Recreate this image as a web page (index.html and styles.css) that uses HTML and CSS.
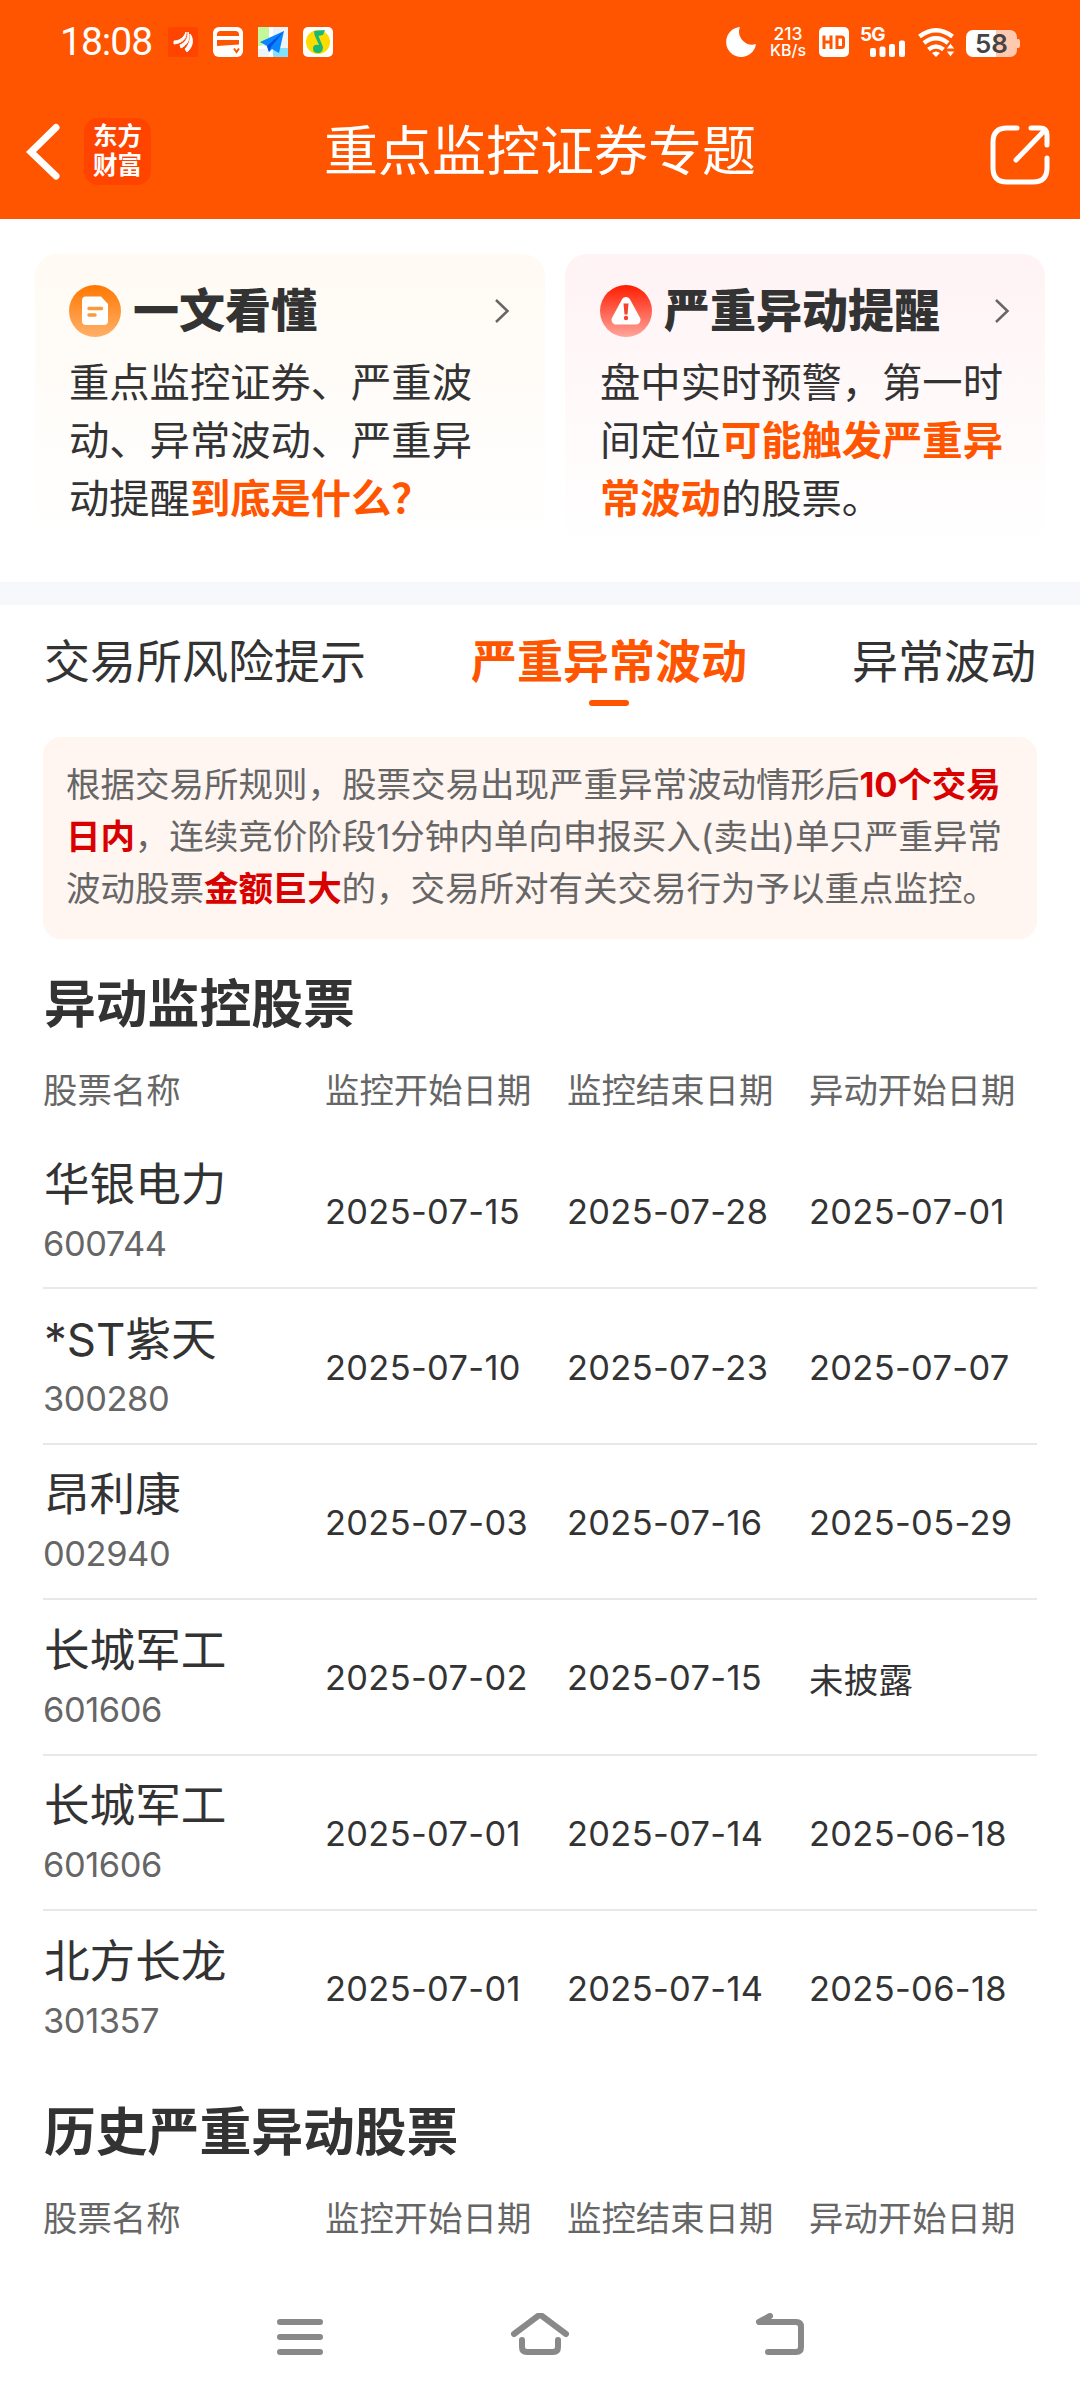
FILE: index.html
```html
<!DOCTYPE html>
<html lang="zh-CN">
<head>
    <meta charset="UTF-8">
    <meta name="viewport" content="width=device-width, initial-scale=1.0">
    <meta name="format-detection" content="telephone=no">
    <title>重点监控证券专题</title>
    <link rel="stylesheet" href="styles.css">
</head>
<body>

<!--顶部-->
<header class="top">
    <div class="status">
        <span class="time">18:08</span>
        <div class="status-apps">
            <svg width="30" height="30" viewBox="0 0 30 30"><rect width="30" height="30" rx="2" fill="#ff4400"/><path d="M6 14C11 14 16 11 18 5C19 12 14 16 6 17zM12 18C17 16 20 12 20 5C23 12 19 18 13 21zM17 22C21 18 23 12 22 7C26 12 25 20 19 25z" fill="#fff" stroke="#fff"/></svg>
            <svg width="30" height="30" viewBox="0 0 30 30"><rect width="30" height="30" rx="6" fill="#fff"/><path d="M4 9V7.500Q4 4 7.500 4H22.500Q26 4 26 7.500V9zM4 13H26V17.500L4 19z" fill="#f50"/><path d="M21 21.500L23.500 25L26 21.500" fill="none" stroke="#f50" stroke-width="2"/></svg>
            <svg width="30" height="30" viewBox="0 0 30 30"><rect width="30" height="30" fill="#eef3f6"/><path d="M0 0H11V14L0 20z" fill="#c3f79c"/><path d="M15 21H30V30H15z" fill="#84e0ff"/><path d="M11 0H15V10H11zM0 19H15V30H11V22H0z" fill="#fff"/><path d="M26 4L2 15L9 19L11 25L14 22L21 26z" fill="#0a84ff"/><path d="M26 4L9 19L11 25L13 20z" fill="#0050e0"/></svg>
            <svg width="30" height="30" viewBox="0 0 30 30"><rect width="30" height="30" rx="5" fill="#fff"/><circle cx="15" cy="15" r="12" fill="#ffdc00"/><path d="M11 4L22 3L20 8L15.500 9L20 20Q20 26 15 26Q10 26 10 21.500Q10 17 16 18L11.500 8z" fill="#17b978"/></svg>
        </div>
        <div class="status-sys">
            <svg class="moon" width="30" height="30" viewBox="0 0 30 30"><path d="M14 0A15 15 0 1 0 30 17A13 13 0 0 1 14 0z" fill="#fff"/></svg>
            <div class="speed"><span>213</span><span>KB/s</span></div>
            <svg class="hd" width="30" height="30" viewBox="0 0 30 30"><rect width="30" height="30" rx="5" fill="#fff"/><path d="M5 8.500V22M12 8.500V22M5 15H12M18 10V20.500H22.500Q24.500 20.500 24.500 18.500V12Q24.500 10 22.500 10z" fill="none" stroke="#f50" stroke-width="3"/></svg>
            <div class="signal">
                <span class="net">5G</span>
                <svg width="36" height="17" viewBox="0 0 36 17"><rect y="8" width="6" height="9" rx="2"/><rect x="9.500" y="6.500" width="6" height="10.500" rx="2"/><rect x="19" y="4" width="6" height="13" rx="2"/><rect x="29" y="0.500" width="6" height="16.500" rx="2"/></svg>
            </div>
            <svg class="wifi" width="37" height="30" viewBox="0 0 37 30"><g fill="none" stroke="#fff" stroke-width="4.500"><path d="M1.500 9.500Q18 -3 34.500 9.500"/><path d="M6 16Q18 6.500 30 16"/><path d="M10.500 22.500Q18 16.500 25.500 22.500"/></g><path d="M14 26Q18 23 22 26L18 30z" fill="#fff"/><path d="M28 22L32.500 16L37 22zM28 24L32.500 30L37 24z" fill="#fff" stroke="#f50"/></svg>
            <div class="battery"><span>58</span></div>
        </div>
    </div>
    <div class="nav">
        <svg class="back" width="36" height="60" viewBox="0 0 36 60"><path d="M31 5.500L6 30L31 54" fill="none" stroke="#fff" stroke-width="7" stroke-linecap="round"/></svg>
        <div class="logo">东方<br>财富</div>
        <h1 class="title">重点监控证券专题</h1>
        <svg class="share" width="60" height="60" viewBox="0 0 60 60"><path d="M27 3H17Q3 3 3 17V43Q3 57 17 57H43Q57 57 57 43V33M41 3H50Q57 3 57 10V20M55 5L26 35" fill="none" stroke="#fff" stroke-width="5" stroke-linecap="round"/></svg>
    </div>
</header>

<!--说明卡片-->
<section class="cards">
    <div class="card card-yellow">
        <div class="card-hd">
            <svg width="52" height="52" viewBox="0 0 52 52"><defs><linearGradient id="g1" x1="0" y1="0" x2="0" y2="1"><stop offset="0" stop-color="#ff7800"/><stop offset="1" stop-color="#ffb06a"/></linearGradient></defs><circle cx="26" cy="26" r="26" fill="url(#g1)"/><path d="M17 11.500H32L39 19V36Q39 40 35 40H17Q13 40 13 36V15.500Q13 11.500 17 11.500z" fill="#fff"/><path d="M20 23.500H32.500M20 30H26" stroke="#f99a3c" stroke-width="3.500" stroke-linecap="round"/></svg>
            <h2>一文看懂</h2>
            <svg class="arrow" width="16" height="24" viewBox="0 0 16 24"><path d="M2 1L13.500 12L2 23" fill="none" stroke="#666" stroke-width="2.500"/></svg>
        </div>
        <p>重点监控证券、严重波动、异常波动、严重异动提醒<b>到底是什么？</b></p>
    </div>
    <div class="card card-red">
        <div class="card-hd">
            <svg width="52" height="52" viewBox="0 0 52 52"><defs><linearGradient id="g2" x1="0" y1="0" x2="0" y2="1"><stop offset="0" stop-color="#ff1c00"/><stop offset="1" stop-color="#ffa59c"/></linearGradient></defs><circle cx="26" cy="26" r="26" fill="url(#g2)"/><path d="M26 16.500L16 35H36z" fill="#fff" stroke="#fff" stroke-width="9" stroke-linejoin="round"/><path d="M23.500 18.500H28.500L27.500 29.500H24.500z" fill="#f5432f"/><circle cx="26" cy="33" r="2.200" fill="#f5432f"/></svg>
            <h2>严重异动提醒</h2>
            <svg class="arrow" width="16" height="24" viewBox="0 0 16 24"><path d="M2 1L13.500 12L2 23" fill="none" stroke="#666" stroke-width="2.500"/></svg>
        </div>
        <p>盘中实时预警，第一时间定位<b>可能触发严重异常波动</b>的股票。</p>
    </div>
</section>

<!--tab-->
<nav class="tabs">
    <a class="tab">交易所风险提示</a>
    <a class="tab on">严重异常波动</a>
    <a class="tab">异常波动</a>
</nav>

<main class="main">
    <p class="notice">根据交易所规则，股票交易出现严重异常波动情形后<b>10个交易日内</b>，连续竞价阶段1分钟内单向申报买入(卖出)单只严重异常波动股票<b>金额巨大</b>的，交易所对有关交易行为予以重点监控。</p>

    <h3 class="sec-title">异动监控股票</h3>
    <div class="row row-hd">
        <span>股票名称</span><span>监控开始日期</span><span>监控结束日期</span><span>异动开始日期</span>
    </div>
    <ul class="list">
        <li class="row">
            <div class="stock"><p class="name">华银电力</p><p class="code">600744</p></div>
            <span>2025-07-15</span><span>2025-07-28</span><span>2025-07-01</span>
        </li>
        <li class="row">
            <div class="stock"><p class="name">*ST紫天</p><p class="code">300280</p></div>
            <span>2025-07-10</span><span>2025-07-23</span><span>2025-07-07</span>
        </li>
        <li class="row">
            <div class="stock"><p class="name">昂利康</p><p class="code">002940</p></div>
            <span>2025-07-03</span><span>2025-07-16</span><span>2025-05-29</span>
        </li>
        <li class="row">
            <div class="stock"><p class="name">长城军工</p><p class="code">601606</p></div>
            <span>2025-07-02</span><span>2025-07-15</span><span>未披露</span>
        </li>
        <li class="row">
            <div class="stock"><p class="name">长城军工</p><p class="code">601606</p></div>
            <span>2025-07-01</span><span>2025-07-14</span><span>2025-06-18</span>
        </li>
        <li class="row">
            <div class="stock"><p class="name">北方长龙</p><p class="code">301357</p></div>
            <span>2025-07-01</span><span>2025-07-14</span><span>2025-06-18</span>
        </li>
    </ul>

    <h3 class="sec-title">历史严重异动股票</h3>
    <div class="row row-hd">
        <span>股票名称</span><span>监控开始日期</span><span>监控结束日期</span><span>异动开始日期</span>
    </div>
</main>

<!--系统导航-->
<footer class="sysbar">
    <svg width="60" height="48" viewBox="0 0 60 48"><path d="M10 9H50M10 24H50M10 39H50"/></svg>
    <svg width="60" height="48" viewBox="0 0 60 48"><path d="M4 21L28 3Q30 1.500 32 3L56 21M12 27V34Q12 39 17 39H43Q48 39 48 34V27"/></svg>
    <svg width="60" height="48" viewBox="0 0 60 48"><path d="M20 3L9 9H46Q51 9 51 14V34Q51 39 46 39H18"/></svg>
</footer>

</body>
</html>
```
FILE: styles.css
```css
*{ box-sizing: border-box; margin: 0; padding: 0;}
body{ width: 1080px; height: 2400px; overflow: hidden; display: flex; flex-direction: column; background: #fff; color: #333; font-family: Inter, "Noto Sans CJK SC", sans-serif;}
ul,li{ list-style: none;}
svg{ display: block; flex: none;}

/* 顶部 */
.top{ height: 219px; background: #ff5500; color: #fff;}
.status{ display: flex; align-items: center; height: 84px; padding: 0 60px;}
.time{ width: 108px; font-family: Roboto, sans-serif; font-size: 39px; line-height: 40px; letter-spacing: -1px;}
.status-apps{ display: flex; gap: 15px;}
.status-sys{ display: flex; align-items: center; margin-left: auto;}
.speed{ display: flex; flex-direction: column; align-items: center; width: 36px; margin: 0 13px 0 14px; font-size: 17.500px; line-height: 16px; font-weight: 500; white-space: nowrap;}
.speed span:last-child{ font-size: 16px;}
.signal{ width: 46px; height: 30px; margin: 0 12px 0 11px;}
.net{ display: block; height: 13px; font-size: 19px; line-height: 15px; font-weight: 700; letter-spacing: -1px;}
.signal svg{ margin-left: 10px; fill: #fff;}
.battery{ display: flex; align-items: center; justify-content: center; width: 51px; height: 27px; margin: 3px 3px 0 11px; border-radius: 7px; background: linear-gradient(90deg, #fff 59%, #ffc9b0 59%); color: #444; font-size: 26px; font-weight: 600; line-height: 27px; position: relative;}
.battery:after{ content: ""; position: absolute; right: -3px; top: 9px; width: 3px; height: 9px; border-radius: 0 2px 2px 0; background: #ffc9b0;}
.nav{ display: flex; align-items: center; height: 135px; padding: 0 30px 0 25px;}
.logo{ width: 67px; height: 67px; margin-left: 23px; padding-top: 4px; border-radius: 14px; background: #ff4400; font-size: 24.500px; line-height: 29px; font-weight: 700; text-align: center;}
.title{ flex: 1; margin-top: 1px; padding-right: 61px; font-size: 54px; line-height: 60px; font-weight: 400; text-align: center;}
.share{ margin-top: 6px;}

/* 说明卡片 */
.cards{ display: flex; gap: 20px; height: 386px; padding: 35px 35px 0; border-bottom: 23px solid #f7f8fb;}
.card{ height: 292px; padding: 31px 35px 0 34px; border-radius: 22px;}
.card-yellow{ width: 510px; background: linear-gradient(#fffaf3, #fff);}
.card-red{ width: 480px; padding-left: 35px; background: linear-gradient(#fff3f4, #fff);}
.card-hd{ display: flex; align-items: center; height: 52px;}
.card-hd h2{ flex: 1; margin: -3px 0 0 12px; font-size: 46px; line-height: 52px; font-weight: 900; white-space: nowrap;}
.card p{ margin: 17px -6px 0 0; font-size: 40.300px; line-height: 58px;}
.card-yellow p{ margin-right: 0;}
.card b{ color: #ff5500; font-weight: 700;}

/* tab */
.tabs{ display: flex; justify-content: space-between; padding: 26px 44px 0;}
.tab{ font-size: 46px; line-height: 60px;}
.on{ color: #ff5500; font-weight: 700;}
.on:after{ content: ""; display: block; width: 40px; height: 6px; margin: 9px auto 0; border-radius: 3px; background: #ff5500;}

.main{ flex: 1; padding: 31px 43px 0;}
.notice{ height: 202px; padding: 22px 23px 0; border-radius: 18px; background: #fff5f1; color: #666; font-size: 34.500px; line-height: 52px;}
.notice b{ color: #d90000; letter-spacing: -.1px;}
.sec-title{ margin: 33px 0 27px 1px; font-size: 51.800px; line-height: 64px;}

/* 列表 */
.row{ display: grid; grid-template-columns: 282px 242px 242px 1fr; align-items: center; height: 155.400px; border-bottom: 2px solid #e8e8e8; font-size: 34.400px; white-space: nowrap;}
.row:last-child{ border-bottom-color: transparent;}
.list{ margin-top: 21px;}
.name{ padding-left: 1px; font-size: 45.600px; line-height: 60px;}
.code{ margin-top: 6px; color: #666; line-height: 46px; letter-spacing: -.4px;}
.stock{ padding-top: 0;}
.list span{ padding-top: 2px; letter-spacing: .35px;}
.row-hd{ height: 50px; border: 0; color: #666;}
.list + .sec-title{ margin-top: 34px;}

/* 系统导航 */
.sysbar{ display: flex; justify-content: space-around; height: 87px; padding: 0 180px;}
.sysbar svg{ fill: none; stroke: #898989; stroke-width: 6; stroke-linecap: round; stroke-linejoin: round;}
```
